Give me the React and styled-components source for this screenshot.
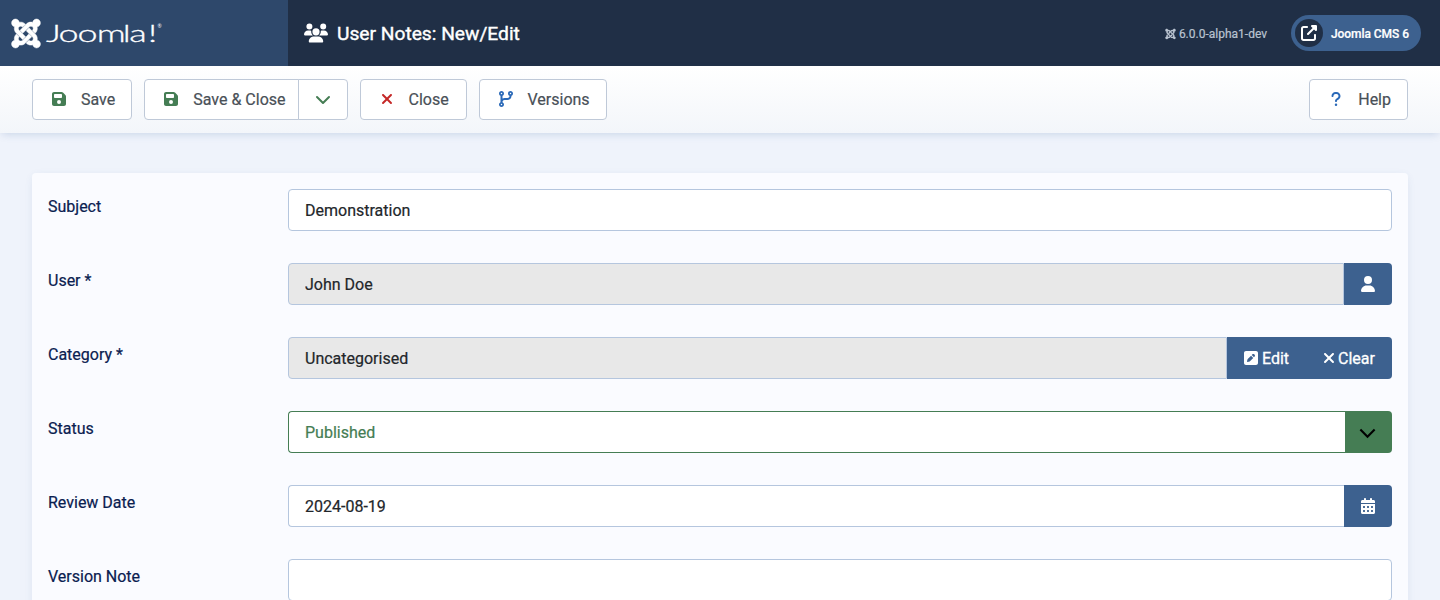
import React from 'react';
import styled, { createGlobalStyle } from 'styled-components';
import {
  FaJoomla, FaUsers, FaFloppyDisk, FaXmark, FaCodeBranch, FaQuestion,
  FaUser, FaSquarePen, FaCalendarDays, FaUpRightFromSquare,
} from 'react-icons/fa6';

const GlobalStyle = createGlobalStyle`
  *, *::before, *::after { box-sizing: border-box; }
  body {
    margin: 0;
    background: #eff3fb;
    font-family: Roboto, "Liberation Sans", sans-serif;
    font-size: 16px;
    line-height: 24px;
    color: #22262a;
    -webkit-text-stroke: 0.2px currentColor;
  }
  button, input { font: inherit; }
`;

const Page = styled.div`
  height: 600px;
  overflow: hidden;
`;

const Header = styled.header`
  display: flex;
  height: 66px;
  background: #202f46;
  color: #fff;
`;

const Brand = styled.div`
  width: 288px;
  display: flex;
  align-items: center;
  padding-left: 11px;
  background: #2e486b;
`;

const BrandMark = styled(FaJoomla)`
  width: 30px;
  height: 33px;
  overflow: visible;
  stroke: #fff;
  stroke-width: 8px;
  stroke-linejoin: round;
`;

const Wordmark = styled.svg`
  width: 122px;
  height: 34px;
  margin-left: 4px;
  fill: #fff;
  stroke: #fff;
  stroke-width: 0.3px;
  font-family: Lato, sans-serif;
  -webkit-text-stroke: 0;
`;

const Title = styled.h1`
  display: flex;
  align-items: center;
  gap: 9px;
  margin: 0 auto 0 16px;
  padding-top: 1px;
  font-size: 19.2px;
  font-weight: 400;
  -webkit-text-stroke: 0.4px currentColor;

  svg { width: 24px; height: 20px; margin-bottom: 1px; }
`;

const HeaderInfo = styled.div`
  display: flex;
  align-items: center;
  gap: 24px;
  padding-right: 19px;
`;

const Version = styled.span`
  display: flex;
  align-items: center;
  gap: 3px;
  padding-top: 2px;
  font-size: 12px;
  color: #b9c3d0;

  svg { width: 11px; height: 12px; }
`;

const SiteLink = styled.a`
  display: flex;
  align-items: center;
  gap: 8px;
  width: 130px;
  height: 36px;
  padding: 0 0 0 4px;
  border-radius: 18px;
  background: #3d618f;
  font-size: 12px;
  font-weight: 500;
  letter-spacing: -0.06px;
  white-space: nowrap;
`;

const SiteIcon = styled.span`
  display: grid;
  place-items: center;
  width: 28px;
  height: 28px;
  border-radius: 50%;
  background: #202f46;

  svg { width: 16px; height: 16px; }
`;

const SiteName = styled.span`
  padding-top: 1px;
`;

const Toolbar = styled.div`
  display: flex;
  gap: 12px;
  height: 67px;
  padding: 13px 32px;
  background: linear-gradient(#fff, #f3f6fa);
  box-shadow: 0 3px 8px -2px rgba(60, 100, 160, 0.22);
`;

const ToolButton = styled.button`
  display: flex;
  align-items: center;
  gap: 12px;
  width: ${(p) => (p.$width ? `${p.$width}px` : 'auto')};
  height: 41px;
  padding: 0 ${(p) => (p.$joined ? 12 : 16)}px 0 16px;
  border: 1px solid #bfc9d8;
  border-radius: ${(p) => (p.$joined ? '4px 0 0 4px' : '4px')};
  margin-left: ${(p) => (p.$end ? 'auto' : '0')};
  background: #fff;
  color: #495057;
  white-space: nowrap;
`;

const ToolIcon = styled.span`
  display: grid;
  place-items: center;
  width: 20px;
  margin-top: -1px;
  color: ${(p) => p.$tone};

  svg { height: 16px; width: auto; }
`;

const ButtonGroup = styled.div`
  display: flex;
`;

const SplitToggle = styled.button`
  display: grid;
  place-items: center;
  width: 50px;
  height: 41px;
  padding: 0 0 0 1px;
  margin-left: -1px;
  border: 1px solid #bfc9d8;
  border-radius: 0 4px 4px 0;
  background: #fff;
  color: #457d54;
`;

const Card = styled.main`
  display: flex;
  flex-direction: column;
  gap: 32px;
  margin: 40px 32px 0;
  padding: 16px;
  min-height: 500px;
  border-radius: 4px;
  background: #fafbff;
  box-shadow: 0 2px 10px -2px rgba(60, 90, 150, 0.14);
`;

const Row = styled.div`
  display: grid;
  grid-template-columns: 240px 1fr;
`;

const Label = styled.label`
  padding-top: 6px;
  color: #0a2050;
`;

const Control = styled.div`
  display: flex;
  height: 42px;
`;

const Input = styled.input`
  flex: 1;
  min-width: 0;
  height: 42px;
  padding: 0 16px;
  border: 1px solid ${(p) => (p.$success ? '#457d54' : '#b5c6de')};
  border-radius: ${(p) => (p.$joined ? '4px 0 0 4px' : '4px')};
  border-right-width: ${(p) => (p.$noEdge ? 0 : '1px')};
  background: ${(p) => (p.readOnly && p.$muted ? '#e8e8e8' : '#fff')};
  color: ${(p) => (p.$success ? '#457d54' : '#22262a')};
  -webkit-text-stroke: 0.2px currentColor;
  outline: 0;
`;

const Addon = styled.button`
  display: flex;
  align-items: center;
  justify-content: center;
  gap: 4px;
  width: ${(p) => p.$width || 48}px;
  padding: ${(p) => (p.$success ? '2px 3px 0 0' : '0')};
  border: 0;
  border-radius: ${(p) => (p.$last ? '0 4px 4px 0' : '0')};
  background: ${(p) => (p.$success ? '#457d54' : '#3d618f')};
  color: ${(p) => (p.$success ? '#000' : '#fff')};
`;

const AddonIcon = styled.span`
  display: flex;
  justify-content: center;
  width: ${(p) => p.$width || 14}px;

  svg { flex: none; width: 16px; height: 16px; }
`;

const AddonText = styled.span`
  padding-top: 1px;
  -webkit-text-stroke: 0.3px currentColor;
`;

const Chevron = ({ size = 16, cap = 'round' }) => (
  <svg width={size} height={size} viewBox="0 0 16 16" fill="none" stroke="currentColor" strokeWidth="2" strokeLinecap={cap} strokeLinejoin={cap === 'round' ? 'round' : 'miter'}>
    <path d="m2 5 6 6 6-6" />
  </svg>
);

function Tool({ icon: Icon, tone, children, ...rest }) {
  return (
    <ToolButton type="button" {...rest}>
      <ToolIcon $tone={tone}><Icon /></ToolIcon>
      {children}
    </ToolButton>
  );
}

function Field({ label, children }) {
  return (
    <Row>
      <Label>{label}</Label>
      <Control>{children}</Control>
    </Row>
  );
}

export default function App() {
  return (
    <Page>
      <GlobalStyle />
      <Header>
        <Brand>
          <BrandMark />
          <Wordmark viewBox="0 0 122 34">
            <text x="0.6 9 21.7 34.5 51.8 56.2 68.7" y="26" fontSize="24" fontWeight="300" transform="scale(1.5 1)">Joomla!</text>
            <text x="112.5" y="12" fontSize="5" strokeWidth="0">®</text>
          </Wordmark>
        </Brand>
        <Title><FaUsers />User Notes: New/Edit</Title>
        <HeaderInfo>
          <Version><FaJoomla />6.0.0-alpha1-dev</Version>
          <SiteLink>
            <SiteIcon><FaUpRightFromSquare /></SiteIcon>
            <SiteName>Joomla CMS 6</SiteName>
          </SiteLink>
        </HeaderInfo>
      </Header>
      <Toolbar>
        <Tool icon={FaFloppyDisk} tone="#457d54">Save</Tool>
        <ButtonGroup>
          <Tool icon={FaFloppyDisk} tone="#457d54" $joined>Save &amp; Close</Tool>
          <SplitToggle type="button" aria-label="More save options"><Chevron /></SplitToggle>
        </ButtonGroup>
        <Tool icon={FaXmark} tone="#c52827" $width={107}>Close</Tool>
        <Tool icon={FaCodeBranch} tone="#2a69b8">Versions</Tool>
        <Tool icon={FaQuestion} tone="#2a69b8" $end>Help</Tool>
      </Toolbar>
      <Card>
        <Field label="Subject"><Input defaultValue="Demonstration" /></Field>
        <Field label="User *">
          <Input readOnly $muted $joined value="John Doe" />
          <Addon $last><AddonIcon><FaUser /></AddonIcon></Addon>
        </Field>
        <Field label="Category *">
          <Input readOnly $muted $joined value="Uncategorised" />
          <Addon $width={79}><AddonIcon><FaSquarePen /></AddonIcon><AddonText>Edit</AddonText></Addon>
          <Addon $width={86} $last><AddonIcon $width={11}><FaXmark /></AddonIcon><AddonText>Clear</AddonText></Addon>
        </Field>
        <Field label="Status">
          <Input readOnly $success $joined $noEdge value="Published" />
          <Addon $success $last $width={47}><Chevron size={17} cap="square" /></Addon>
        </Field>
        <Field label="Review Date">
          <Input $joined $noEdge defaultValue="2024-08-19" />
          <Addon $last><AddonIcon><FaCalendarDays /></AddonIcon></Addon>
        </Field>
        <Field label="Version Note"><Input /></Field>
      </Card>
    </Page>
  );
}
